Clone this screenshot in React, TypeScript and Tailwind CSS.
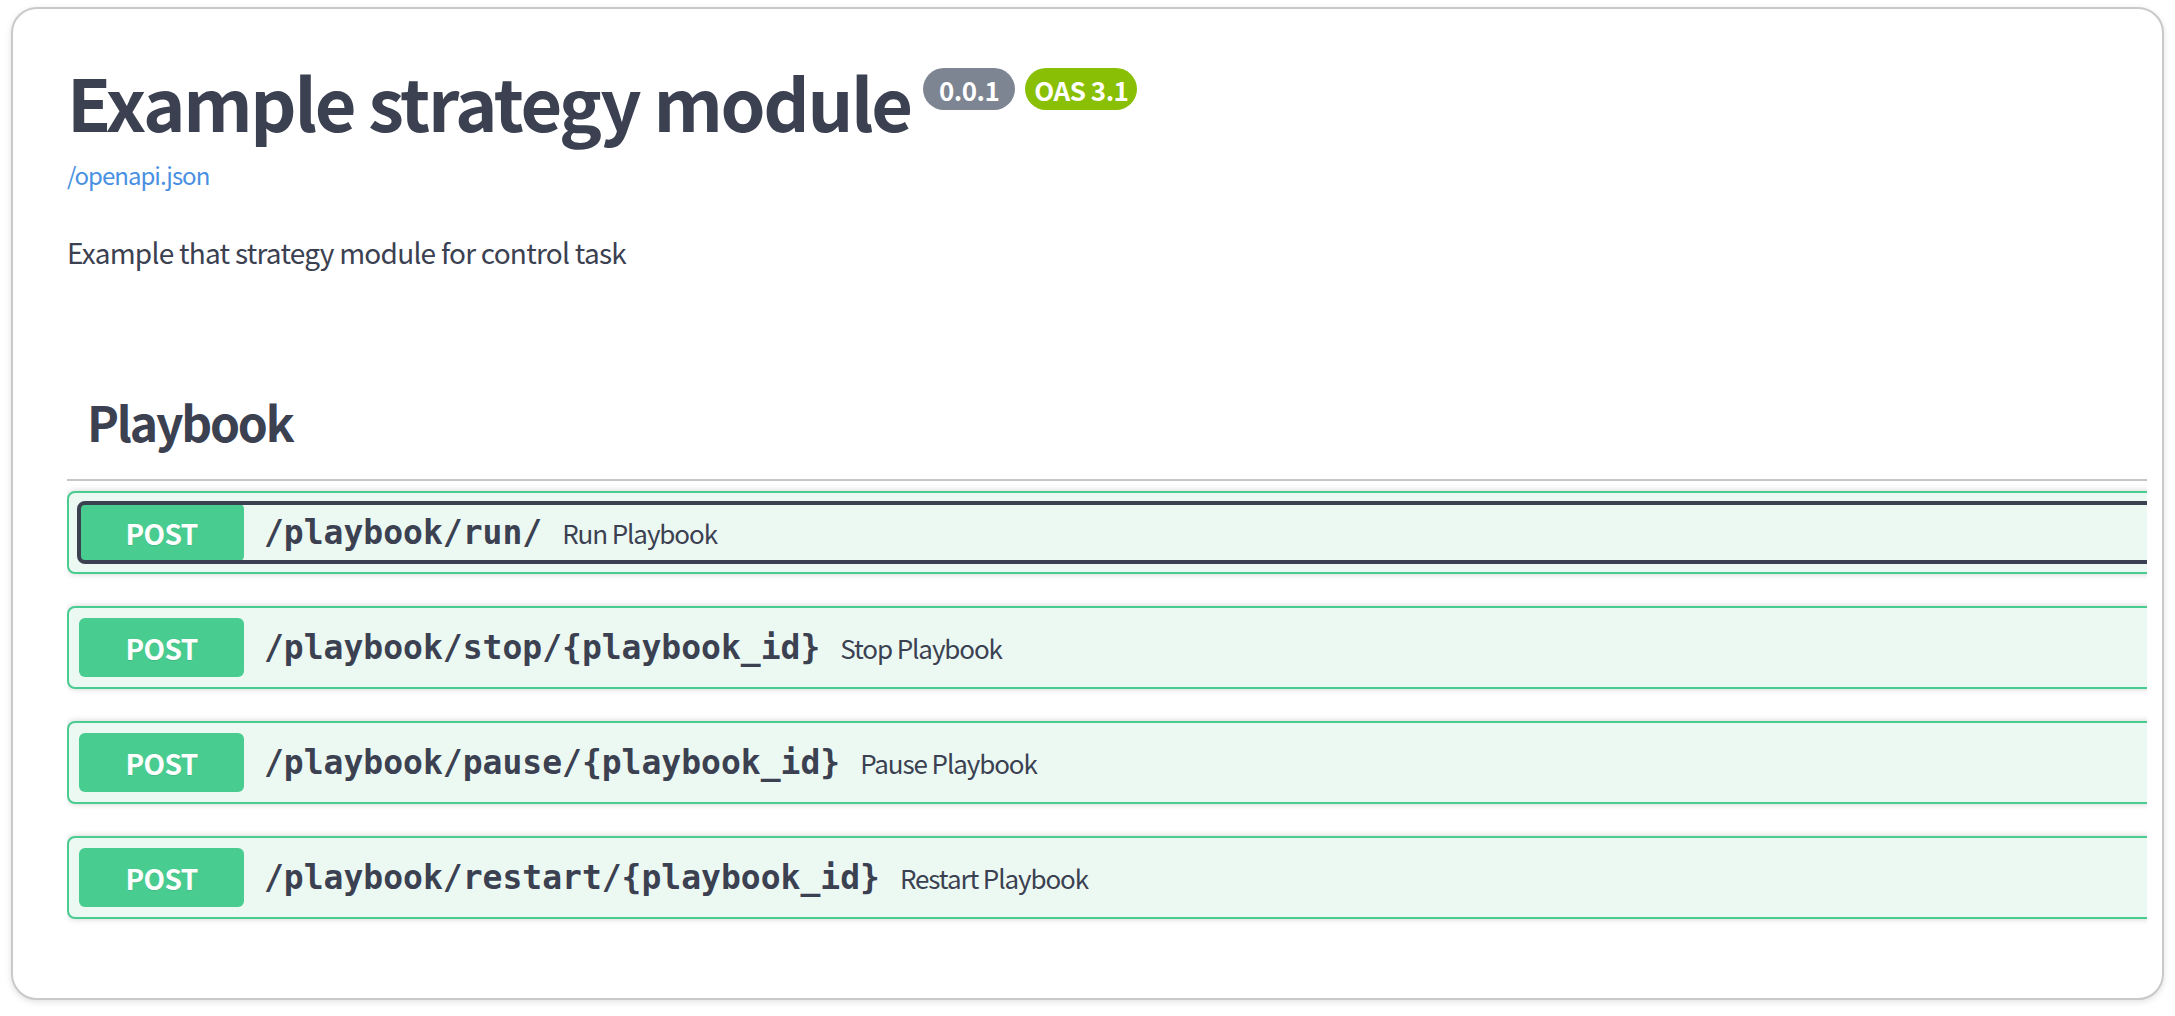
import React from "react";

const sans = { fontFamily: '"Noto Sans CJK KR", "Noto Sans", sans-serif' };

type Op = { path: string; summary: string; focused?: boolean };

const ops: Op[] = [
  { path: "/playbook/run/", summary: "Run Playbook", focused: true },
  { path: "/playbook/stop/{playbook_id}", summary: "Stop Playbook" },
  { path: "/playbook/pause/{playbook_id}", summary: "Pause Playbook" },
  { path: "/playbook/restart/{playbook_id}", summary: "Restart Playbook" },
];

function OpBlock({ op }: { op: Op }) {
  return (
    <div className="w-[calc(100%+40px)] mb-[32px] rounded-[8px] border-2 border-[#49cc90] bg-[#ecf9f3] shadow-[0_0_6px_rgba(0,0,0,0.19)] p-[10px]">
      <div
        className={
          "flex items-center h-[59px] rounded-[6px] " +
          (op.focused ? "outline-4 outline-solid outline-[#3b4151] -outline-offset-2" : "")
        }
      >
        <span
          className="flex items-center justify-center w-[165px] h-[59px] shrink-0 rounded-[6px] bg-[#49cc90] text-white text-[28px] font-bold tracking-[-0.6px] [text-shadow:0_1px_0_rgba(0,0,0,0.1)]"
          style={sans}
        >
          POST
        </span>
        <span
          className="px-[20px] text-[33px] font-bold text-[#3b4151] whitespace-nowrap"
          style={{ fontFamily: '"DejaVu Sans Mono", monospace' }}
        >
          {op.path}
        </span>
        <span className="text-[26px] tracking-[-1.1px] text-[#3b4151] whitespace-nowrap" style={sans}>
          {op.summary}
        </span>
      </div>
    </div>
  );
}

export default function App() {
  return (
    <div className="w-[2175px] h-[1016px] bg-white pt-[7px] px-[11px]" style={sans}>
      <div className="h-[993px] rounded-[26px] border-2 border-[#c9c9c9] bg-white shadow-[0_2px_6px_rgba(0,0,0,0.12)] pl-[54px] pr-[15px] pt-[40px]">
        <div className="h-full overflow-hidden">
          <div className="flex items-start">
            <h2 className="text-[72px] leading-[104px] font-bold tracking-[-2.3px] text-[#3b4151] whitespace-nowrap">
              Example strategy module
            </h2>
            <span className="ml-[12px] mt-[19px] h-[42px] flex items-center rounded-full bg-[#7d8492] px-[16px] text-white text-[26px] font-bold tracking-[-0.5px]">
              0.0.1
            </span>
            <span className="ml-[10px] mt-[19px] h-[42px] flex items-center rounded-full bg-[#89bf04] px-[9px] text-white text-[26px] font-bold tracking-[-0.5px]">
              OAS 3.1
            </span>
          </div>
          <div className="mt-[5px] text-[24px] leading-[34px] tracking-[-1px] text-[#4990e2]">/openapi.json</div>
          <p className="mt-[40px] text-[28px] leading-[40px] tracking-[-0.75px] text-[#3b4151]">
            Example that strategy module for control task
          </p>
          <h3 className="mt-[114px] pl-[20px] pb-[23px] text-[48px] leading-[70px] font-bold tracking-[-2.2px] text-[#3b4151] border-b-2 border-[#3b4151]/30">
            Playbook
          </h3>
          <div className="mt-[10px]">
            {ops.map((op) => (
              <OpBlock key={op.path} op={op} />
            ))}
          </div>
        </div>
      </div>
    </div>
  );
}
